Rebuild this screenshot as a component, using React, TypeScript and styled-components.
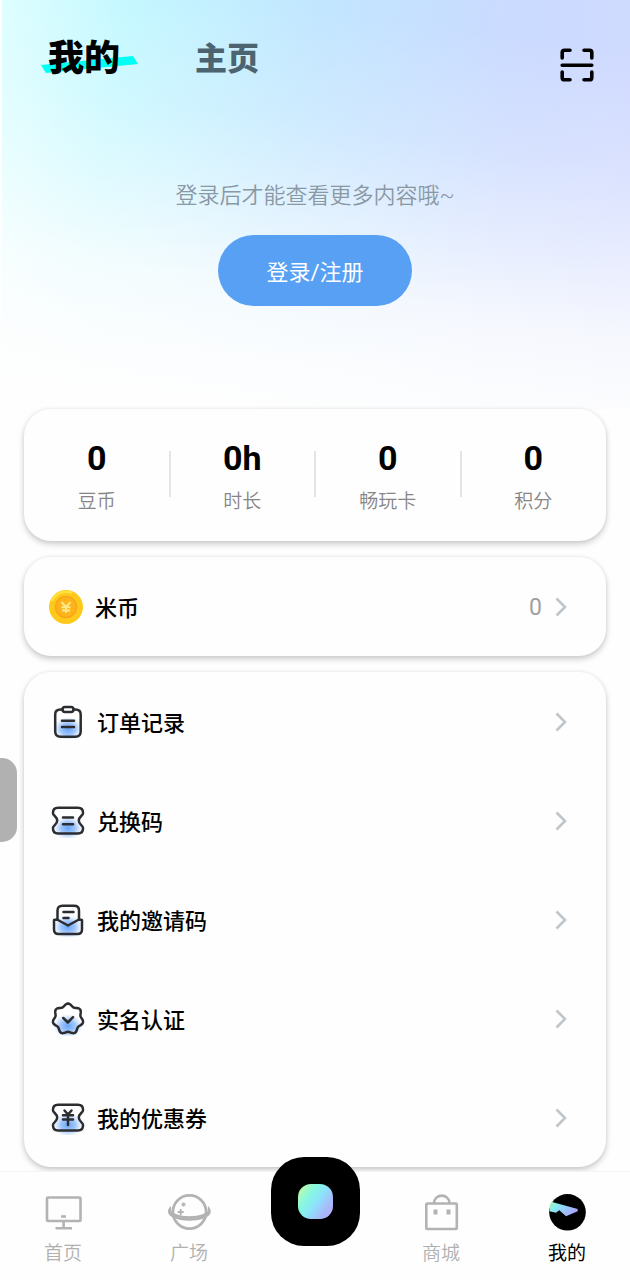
import React from 'react';
import styled, { createGlobalStyle } from 'styled-components';

const GlobalStyle = createGlobalStyle`
  *, *::before, *::after { box-sizing: border-box; }
  body {
    margin: 0;
    background: #fefefe;
    font-family: Roboto, "Noto Sans CJK SC", sans-serif;
    color: #000;
  }
  button { font: inherit; color: inherit; border: 0; padding: 0; background: none; cursor: pointer; }
  a { color: inherit; text-decoration: none; }
  svg { display: block; flex: none; }
`;

const Page = styled.div`
  position: relative;
  min-height: 100vh;
  display: flex;
  flex-direction: column;
`;

const Hero = styled.header`
  height: 409px;
  border-left: 2px solid #fdfefe;
  background:
    linear-gradient(188deg, rgba(254, 254, 254, 0) 10%, rgba(254, 254, 254, 0.22) 34%, rgba(254, 254, 254, 0.52) 52%, rgba(254, 254, 254, 0.82) 68%, rgba(254, 254, 254, 0.94) 82%, #fefefe 94%),
    linear-gradient(99deg, #dcfeff 0%, #c2f8ff 18%, #c2e6ff 46%, #cbdaff 76%, #d2daff 100%);
`;

const TopBar = styled.div`
  display: flex;
  align-items: flex-end;
  justify-content: space-between;
  padding: 34px 36px 0 46px;
`;

const Tabs = styled.nav`
  display: flex;
  align-items: center;
  gap: 75px;
`;

const Tab = styled.a<{ $active?: boolean }>`
  position: relative;
  padding-top: 2px;
  font-size: ${(p) => (p.$active ? 36 : 32)}px;
  line-height: 46px;
  font-weight: 900;
  color: ${(p) => (p.$active ? '#000' : '#4c6470')};
`;

const TabText = styled.span`
  position: relative;
`;

const Brush = styled.svg`
  position: absolute;
  left: -8px;
  top: 20px;
`;

const Welcome = styled.div`
  display: flex;
  flex-direction: column;
  align-items: center;
  gap: 23px;
  padding: 98px 2px 0 0;
`;

const Hint = styled.p`
  margin: 0;
  font-size: 22px;
  line-height: 32px;
  font-weight: 350;
  color: #8a98a4;
`;

const LoginButton = styled.button`
  width: 194px;
  height: 71px;
  border-radius: 36px;
  background: #58a0f4;
  color: #fff;
  font-size: 22px;
  line-height: 32px;
  padding-top: 4px;
`;

const Cards = styled.main`
  display: flex;
  flex-direction: column;
  gap: 16px;
  padding: 0 24px 5px;
`;

const Card = styled.section`
  background: #fefefe;
  border-radius: 27px;
  box-shadow: 0 3px 6px rgba(0, 0, 0, 0.2), 0 0 4px rgba(0, 0, 0, 0.06);
`;

const Stats = styled(Card)`
  display: grid;
  grid-template-columns: repeat(4, 1fr);
  align-items: center;
  height: 132px;
  padding-top: 10px;
`;

const Stat = styled.div`
  display: flex;
  flex-direction: column;
  align-items: center;
  position: relative;
  & + &::before {
    content: '';
    position: absolute;
    left: -1px;
    top: 15px;
    width: 2px;
    height: 46px;
    background: #e4e4e4;
  }
`;

const StatValue = styled.strong`
  font-size: 34px;
  line-height: 44px;
  font-weight: 700;
`;

const StatLabel = styled.span`
  font-size: 19px;
  line-height: 44px;
  font-weight: 350;
  color: #868686;
`;

const Row = styled.a<{ $coin?: boolean }>`
  display: flex;
  align-items: center;
  gap: 12px;
  height: 99px;
  padding: 0 38px 0 ${(p) => (p.$coin ? 25 : 27)}px;
`;

const RowLabel = styled.span`
  flex: 1;
  padding-top: 4px;
  font-size: 22px;
  line-height: 32px;
  font-weight: 500;
`;

const RowValue = styled.span`
  padding-top: 2px;
  font-size: 23px;
  line-height: 32px;
  font-weight: 400;
  color: #a0a0a0;
`;

const BottomNav = styled.nav`
  position: sticky;
  bottom: 0;
  margin-top: auto;
  display: grid;
  grid-template-columns: repeat(5, 1fr);
  justify-items: center;
  height: 108px;
  background: #fefefe;
  box-shadow: 0 -1px 0 #f4f4f4;
`;

const NavItem = styled.a<{ $active?: boolean }>`
  display: flex;
  flex-direction: column;
  align-items: center;
  padding-top: 20px;
  font-size: 19px;
  line-height: 36px;
  font-weight: ${(p) => (p.$active ? 400 : 350)};
  color: ${(p) => (p.$active ? '#000' : '#b0b0b0')};
`;

const PlayButton = styled.button`
  display: flex;
  align-items: center;
  justify-content: center;
  width: 89px;
  height: 89px;
  margin-top: -15px;
  border-radius: 33px;
  background: #000;
`;

const PlayGem = styled.span`
  width: 35px;
  height: 35px;
  border-radius: 13px;
  background: linear-gradient(125deg, #c4fba4 5%, #86f8e0 32%, #8ce4fa 52%, #a8b8fa 78%, #c4a8f8 100%);
`;

const SideHandle = styled.button`
  position: fixed;
  left: 0;
  top: 758px;
  width: 17px;
  height: 84px;
  border-radius: 0 15px 15px 0;
  background: #b1b1b1;
`;

const ScanButton = styled.button`
  width: 34px;
  height: 34px;
`;

const ScanIcon = () => (
  <svg width="34" height="34" viewBox="0 0 34 34" fill="none" stroke="#000" strokeWidth="3.6" strokeLinecap="round" strokeLinejoin="round">
    <path d="M2.2 10V4.6Q2.2 2.200 4.600 2.200H10M24 2.200h5.400q2.400 0 2.400 2.400V10M31.800 24v5.400q0 2.400-2.400 2.400H24M10 31.800H4.600q-2.400 0-2.400-2.400V24M2.200 17.300h29.600" />
  </svg>
);

const Chevron = () => (
  <svg width="14" height="20" viewBox="0 0 14 20" fill="none" stroke="#bec5cb" strokeWidth="2.600">
    <path d="M2.500 1.500L11 10L2.500 18.500" />
  </svg>
);

const CoinIcon = () => (
  <svg width="34" height="34" viewBox="0 0 34 34">
    <circle cx="17" cy="17" r="17" fill="#fdca1c" />
    <path d="M3 11A15.300 15.300 0 0 1 23 3" fill="none" stroke="#ffe33c" strokeWidth="2.400" />
    <circle cx="17" cy="17" r="10.500" fill="#fdb41a" stroke="#faa61c" strokeWidth="1.600" />
    <path d="M12.500 12L17 17L21.500 12M12.500 17.300H21.500M13 20.500H21M17 17V23" fill="none" stroke="#ffe88c" strokeWidth="1.900" />
  </svg>
);

const LineIcon = ({ id, glow = 24, children }: { id: string; glow?: number; children: React.ReactNode }) => (
  <svg width="34" height="34" viewBox="0 0 34 34" fill="none" stroke="#2b2d30" strokeWidth="2.500" strokeLinecap="round" strokeLinejoin="round">
    <defs>
      <radialGradient id={id}>
        <stop offset="0" stopColor="#5f9ff8" stopOpacity="0.95" />
        <stop offset="0.5" stopColor="#7ab0fa" stopOpacity="0.7" />
        <stop offset="1" stopColor="#a8ccff" stopOpacity="0" />
      </radialGradient>
    </defs>
    <ellipse cx="17" cy={glow} rx="15" ry="12" fill={`url(#${id})`} stroke="none" />
    {children}
  </svg>
);

const TICKET =
  'M7 3.700H27Q32 3.700 32 8.500V9.500C32 11.500 27.800 12.500 27.800 16.600S32 21.700 32 23.700V24.500Q32 29.500 27 29.500H7Q2 29.500 2 24.500V23.700C2 21.700 6.200 20.700 6.200 16.600S2 11.500 2 9.500V8.500Q2 3.700 7 3.700Z';

// Outline of the seven-lobed verification badge.
const BADGE =
  'M' +
  Array.from({ length: 84 }, (_, i) => {
    const a = (i / 84) * Math.PI * 2;
    const r = 14.1 + 1.3 * Math.cos(7 * a);
    return `${(17 + r * Math.sin(a)).toFixed(2)} ${(17 - r * Math.cos(a)).toFixed(2)}`;
  }).join('L') +
  'Z';

const menu = [
  {
    label: '订单记录',
    icon: (
      <LineIcon id="glow-order">
        <path d="M11.500 4.500H9.500Q4.200 4.500 4.200 9.500V26.500Q4.200 31.700 9.500 31.700H24.500Q29.700 31.700 29.700 26.500V9.500Q29.700 4.500 24.500 4.500H22.500" />
        <rect x="11.500" y="2" width="11" height="5" rx="2.500" />
        <path d="M11 15.700H23M11 22H23" />
      </LineIcon>
    ),
  },
  {
    label: '兑换码',
    icon: (
      <LineIcon id="glow-code">
        <path d={TICKET} />
        <path d="M12 13.500H22M12 20.200H22" />
      </LineIcon>
    ),
  },
  {
    label: '我的邀请码',
    icon: (
      <LineIcon id="glow-invite">
        <path d="M6.500 15.500V7.500Q6.500 2.800 11.500 2.800H23Q28 2.800 28 7.500V15.500" />
        <path d="M3 17L6 16.500L17 22.500L28 16.500L31 17V26.500Q31 31 26.500 31H7.500Q3 31 3 26.500Z" />
        <path d="M12.500 9H22.500M12.500 15H17.500" />
      </LineIcon>
    ),
  },
  {
    label: '实名认证',
    icon: (
      <LineIcon id="glow-verify">
        <path d={BADGE} />
        <path d="M12.300 16L16.800 20.500L22 15.200" />
      </LineIcon>
    ),
  },
  {
    label: '我的优惠券',
    icon: (
      <LineIcon id="glow-coupon">
        <path d={TICKET} />
        <path d="M13.500 9.500L17 13.500L20.500 9.500M12 14.200H22M12 18.500H22M17 14V24" />
      </LineIcon>
    ),
  },
];

const stats = [
  { value: '0', label: '豆币' },
  { value: '0h', label: '时长' },
  { value: '0', label: '畅玩卡' },
  { value: '0', label: '积分' },
];

const HomeIcon = () => (
  <svg width="44" height="44" viewBox="0 0 44 44" fill="none" stroke="#b3b3b3" strokeWidth="2.600">
    <rect x="6" y="5.500" width="33.500" height="23.500" rx="1" />
    <path d="M20 24.500H25M22.600 29V35.500M14.500 36.200H31" />
  </svg>
);

const PlanetIcon = () => (
  <svg width="44" height="44" viewBox="0 0 44 44">
    <circle cx="22.500" cy="20" r="16.600" fill="none" stroke="#b3b3b3" strokeWidth="2.700" />
    <path d="M4 14C-.5 18 -.2 22.500 6 25.500C15 29.800 30 29.800 39 25.500C45 22.500 45 18 41 14L40.500 19.500C37 22.500 30 24.200 22.500 24.200C15 24.200 8 22.500 4.500 19.500Z" fill="#b3b3b3" />
    <path d="M13.700 17V23M10.700 20H16.700M16.500 10.500V14.500M14.500 12.500H18.500" stroke="#b3b3b3" strokeWidth="1.900" />
  </svg>
);

const BagIcon = () => (
  <svg width="44" height="44" viewBox="0 0 44 44" fill="none" stroke="#b3b3b3" strokeWidth="2.600">
    <rect x="7.300" y="11.500" width="30.500" height="25.500" rx="1" />
    <path d="M15 11.500C15 1 30.500 1 30.500 11.500" />
    <path d="M16.500 17.500V22.500M29.500 17.500V22.500" strokeWidth="4" />
  </svg>
);

const MineIcon = () => (
  <svg width="44" height="44" viewBox="0 0 44 44">
    <defs>
      <linearGradient id="visor" x1="0" y1="0" x2="1" y2="0.5">
        <stop offset="0" stopColor="#a6fba8" />
        <stop offset="0.35" stopColor="#86e8f4" />
        <stop offset="1" stopColor="#a9a6fb" />
      </linearGradient>
    </defs>
    <circle cx="22.500" cy="20.300" r="18.300" fill="#000" />
    <path d="M6.200 9.700L32.700 17V19.300L21 24.300L14.300 18.300L11 20.700L4.500 19.300Q4.800 13 6.200 9.700Z" fill="url(#visor)" />
  </svg>
);

export default function App() {
  return (
    <>
      <GlobalStyle />
      <Page>
        <Hero>
          <TopBar>
            <Tabs>
              <Tab href="#mine" $active>
                <Brush width="98" height="22" viewBox="0 0 98 22" aria-hidden="true">
                  <path d="M1 11L93 2L98 10L6 19Z" fill="#00fff4" />
                </Brush>
                <TabText>我的</TabText>
              </Tab>
              <Tab href="#profile">主页</Tab>
            </Tabs>
            <ScanButton aria-label="扫一扫">
              <ScanIcon />
            </ScanButton>
          </TopBar>
          <Welcome>
            <Hint>登录后才能查看更多内容哦~</Hint>
            <LoginButton>登录/注册</LoginButton>
          </Welcome>
        </Hero>

        <Cards>
          <Stats>
            {stats.map((s) => (
              <Stat key={s.label}>
                <StatValue>{s.value}</StatValue>
                <StatLabel>{s.label}</StatLabel>
              </Stat>
            ))}
          </Stats>
          <Card>
            <Row href="#coins" $coin>
              <CoinIcon />
              <RowLabel>米币</RowLabel>
              <RowValue>0</RowValue>
              <Chevron />
            </Row>
          </Card>
          <Card>
            {menu.map((m) => (
              <Row href="#menu" key={m.label}>
                {m.icon}
                <RowLabel>{m.label}</RowLabel>
                <Chevron />
              </Row>
            ))}
          </Card>
        </Cards>

        <SideHandle aria-label="展开侧栏" />

        <BottomNav>
          <NavItem href="#home">
            <HomeIcon />
            首页
          </NavItem>
          <NavItem href="#square">
            <PlanetIcon />
            广场
          </NavItem>
          <PlayButton aria-label="开始">
            <PlayGem />
          </PlayButton>
          <NavItem href="#shop">
            <BagIcon />
            商城
          </NavItem>
          <NavItem href="#mine" $active>
            <MineIcon />
            我的
          </NavItem>
        </BottomNav>
      </Page>
    </>
  );
}
